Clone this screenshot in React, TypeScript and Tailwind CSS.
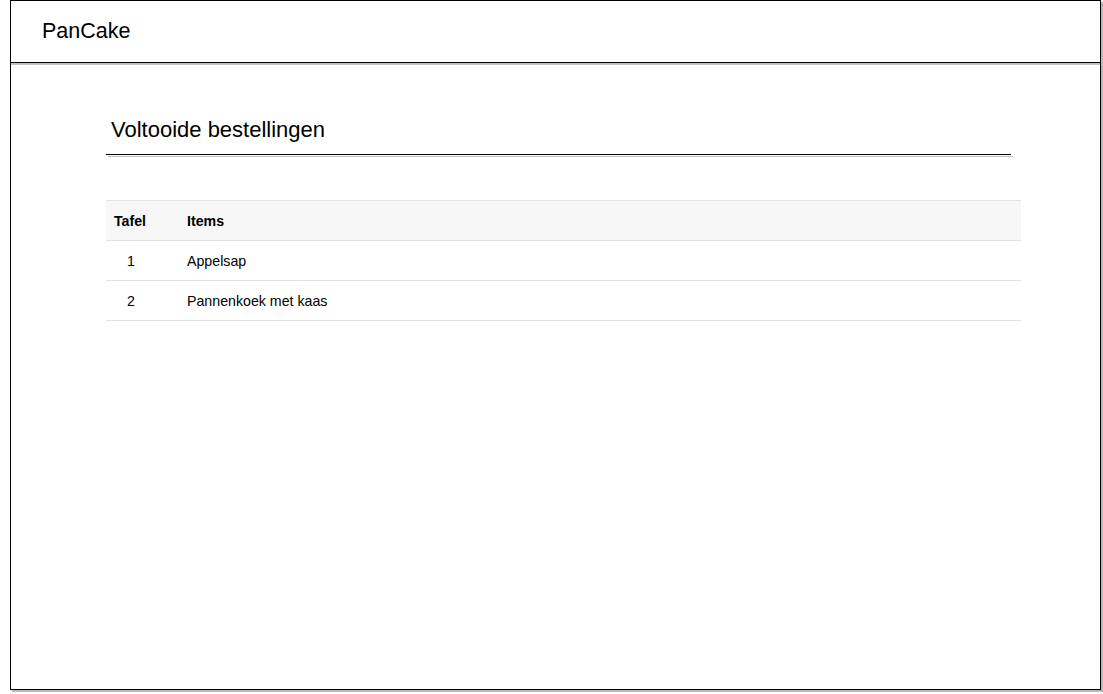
export default function App() {
  const rows = [
    { tafel: 1, items: "Appelsap" },
    { tafel: 2, items: "Pannenkoek met kaas" },
  ];

  return (
    <div className="min-h-screen bg-white font-['Liberation_Sans',Arial,sans-serif] text-black">
      <div className="ml-[10px] w-[1091px] h-[690px] border border-black shadow-[2px_2px_0_#b8b8b8] flex flex-col">
        {/* Header */}
        <div className="h-[62px] shrink-0 border-b border-black shadow-[0_2px_0_#c0c0c0] flex items-center pl-[31px]">
          <h1 className="text-[21.5px] leading-none">PanCake</h1>
        </div>

        {/* Content */}
        <div className="pl-[95px] pt-[53px]">
          <h2 className="pl-[5px] text-[22px] leading-[28px]">Voltooide bestellingen</h2>
          <div className="mt-[10px] w-[905px] h-px bg-black shadow-[2px_2px_0_#c0c0c0]" />

          <div className="mt-[45px] w-[915px] text-[14.2px]">
            <div className="grid grid-cols-[81px_1fr] h-[41px] pt-[2px] items-center bg-[#f7f7f7] border-y border-[#e2e2e2] font-bold">
              <div className="pl-2">Tafel</div>
              <div>Items</div>
            </div>
            {rows.map((r) => (
              <div
                key={r.tafel}
                className="grid grid-cols-[81px_1fr] h-[40px] pt-[2px] items-center border-b border-[#e2e2e2]"
              >
                <div className="w-[50px] text-center">{r.tafel}</div>
                <div>{r.items}</div>
              </div>
            ))}
          </div>
        </div>
      </div>
    </div>
  );
}
